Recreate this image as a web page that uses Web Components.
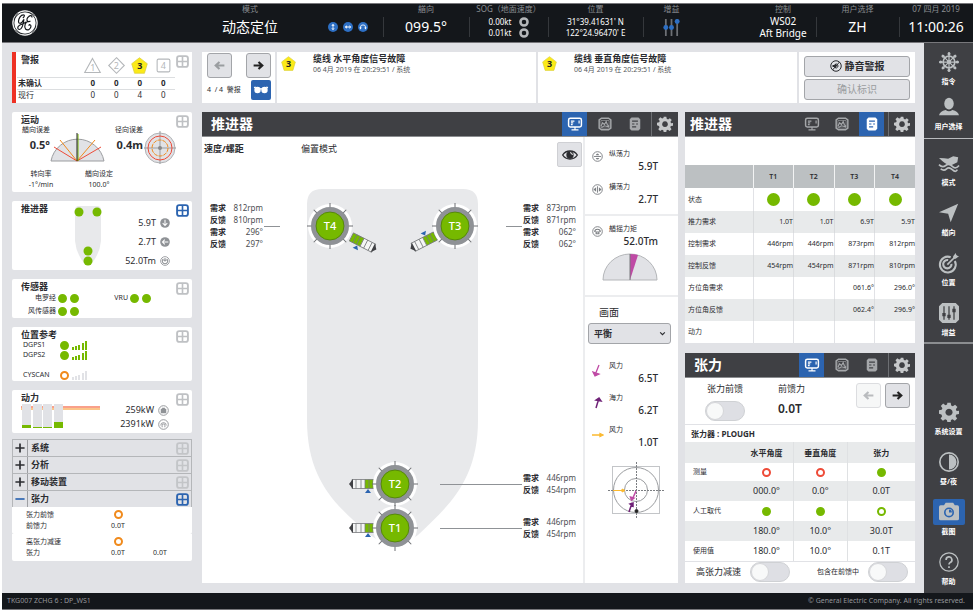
<!DOCTYPE html>
<html lang="zh">
<head>
<meta charset="utf-8">
<meta name="viewport" content="width=device-width, initial-scale=1">
<title>动态定位</title>
<style>
  body { margin: 0; background: #fff; font-family: "Noto Sans", "Noto Sans CJK SC", sans-serif; color: #2b2c30; }
</style>
</head>
<body>
<dp-app></dp-app>
<script>
const BASE = `
  *, *::before, *::after { box-sizing: border-box; }
  h2, h3, p, dl, dd, dt { margin: 0; }
  button, input, select { font: inherit; color: inherit; margin: 0; padding: 0; }
  button { cursor: pointer; }
  table { border-collapse: collapse; width: 100%; table-layout: fixed; }
  th, td { padding: 0; font-weight: 400; white-space: nowrap; }
  svg { display: block; }
`;
function define(name, css, html) {
  const tpl = document.createElement('template');
  customElements.define(name, class extends HTMLElement {
    constructor() {
      super();
      this.attachShadow({ mode: 'open' });
    }
    connectedCallback() {
      if (this.shadowRoot.firstChild) return;
      tpl.innerHTML = `<style>${BASE}${css}</style>${typeof html === 'function' ? html(this) : html}`;
      this.shadowRoot.append(tpl.content.cloneNode(true));
    }
  });
}

/* ---------- icons, all on a 24-unit grid ---------- */
const GEAR = `<path fill-rule="evenodd" d="M10 1h4l.6 3.2 2 .9 2.700-1.900 2.800 2.800-1.900 2.700.9 2L24 10.500v4l-3.200.5-.9 2 1.900 2.700-2.800 2.800-2.700-1.900-2 .9L14 24h-4l-.6-2.500-2-.9-2.700 1.900-2.800-2.800 1.900-2.700-.9-2L0 14v-4l3.200-.6.9-2-1.900-2.700 2.800-2.800 2.700 1.900 2-.9zM12 8a4.300 4.300 0 1 0 .01 0z"/>`;
const ICONS = {
  grid: `<rect x="2" y="2" width="20" height="20" rx="4" fill="none" stroke="currentColor" stroke-width="3.500"/><path d="M12 2v20M2 12h20" stroke="currentColor" stroke-width="3"/>`,
  left: `<path d="M21 12H6M12 5.500L5 12l7 6.500" fill="none" stroke="currentColor" stroke-width="4"/>`,
  right: `<path d="M3 12h15M12 5.500l7 6.500-7 6.500" fill="none" stroke="currentColor" stroke-width="4"/>`,
  glasses: `<circle cx="6" cy="12" r="5.500"/><circle cx="18" cy="12" r="5.500"/><path d="M0 8l3-1M24 8l-3-1M9 10h6" stroke="currentColor" stroke-width="2"/>`,
  monitor: `<rect x="1" y="2" width="22" height="15" rx="3" fill="none" stroke="currentColor" stroke-width="2.500"/><path d="M12 17v4M6 22h12M5 7h6M5 10h4M5 13h3M19 6v5" stroke="currentColor" stroke-width="2" fill="none"/>`,
  chart: `<path d="M6 2h12l4 3v14l-4 3H6l-4-3V5z" fill="none" stroke="currentColor" stroke-width="2.500"/><path d="M5 6h14v13H5z" fill="none" stroke="currentColor" stroke-width="1"/><path d="M5 16l3-6 3 3 3-5 2 5 3 3M6 18l5-3 8 2" fill="none" stroke="currentColor" stroke-width="2"/>`,
  list: `<path fill-rule="evenodd" d="M6 1h12l3 3v16l-3 3H6l-3-3V4zM7 6v2h10V6zM7 11v2h4v-2zM14 11v2h3v-2zM7 16v2h7v-2z"/>`,
  gear: GEAR,
  eye: `<path d="M1 12C6 4 18 4 23 12 18 20 6 20 1 12z" fill="none" stroke="currentColor" stroke-width="2"/><circle cx="12" cy="12" r="5.500"/><path d="M12 8.500a3.500 3.500 0 0 1 3.500 3.500" fill="none" stroke="#fff" stroke-width="1.500"/>`,
  mute: `<circle cx="12" cy="12" r="10.500" fill="none" stroke="currentColor" stroke-width="2"/><path d="M5 10h3l5-4v12l-5-4H5z"/><path d="M15 9q2 3 0 6M5 20L19 4" fill="none" stroke="currentColor" stroke-width="2"/>`,
  chevron: `<path d="M4 8l8 8 8-8" fill="none" stroke="currentColor" stroke-width="4"/>`,
  wheel: `<circle cx="12" cy="12" r="7" fill="none" stroke="currentColor" stroke-width="2"/><circle cx="12" cy="12" r="2.500"/><path d="M12 0v24M0 12h24M3.500 3.500l17 17M20.500 3.500l-17 17" stroke="currentColor" stroke-width="1.500"/><circle cx="12" cy="2" r="1.800"/><circle cx="12" cy="22" r="1.800"/><circle cx="2" cy="12" r="1.800"/><circle cx="22" cy="12" r="1.800"/><circle cx="5" cy="5" r="1.800"/><circle cx="19" cy="5" r="1.800"/><circle cx="5" cy="19" r="1.800"/><circle cx="19" cy="19" r="1.800"/>`,
  user: `<ellipse cx="12" cy="8" rx="5.700" ry="7"/><path d="M0 22q1-5 8-6.500 4 3 8 0 7 1.500 8 6.500z"/>`,
  wave: `<path d="M0 6q7 0 11 1l6-3 6 1-1 6-6 3q-5 1-9-2Q3 9 0 6z"/><path d="M0 14q4 4 8 1t8 1 8-1M2 19q4 3 7 0t7 1 6 0" fill="none" stroke="currentColor" stroke-width="2"/>`,
  pointer: `<path d="M23 1L14 23l-3-10L0 11z"/>`,
  target: `<path d="M19 9.500A9.500 9.500 0 1 1 14 5M15 13a5 5 0 1 1-4-4.500" fill="none" stroke="currentColor" stroke-width="2.500"/><path d="M10 14L21 3" stroke="currentColor" stroke-width="2"/><path d="M17 4l3-4 1 3 3 1-4 3h-3z"/>`,
  sliders: `<path d="M4 0h16l4 4v16l-4 4H4l-4-4V4z"/><path d="M6 4v16M12 4v16M18 4v16" stroke="#3f4044" stroke-width="1.500"/><path d="M4 12h4v4H4zM10 14h4v4h-4zM16 7h4v4h-4z" fill="#3f4044"/>`,
  contrast: `<circle cx="12" cy="12" r="11" fill="none" stroke="currentColor" stroke-width="2"/><path d="M12 3a9 9 0 0 1 0 18z"/>`,
  camera: `<path d="M2 4h4l2-3h9l2 3h3q2 0 2 2v14q0 2-2 2H2q-2 0-2-2V6q0-2 2-2z"/><circle cx="12" cy="12.500" r="6" fill="#2c64b0"/><circle cx="12" cy="12.500" r="4" fill="currentColor"/><path d="M12 12.500V9a3.500 3.500 0 0 1 3.500 3.500z" fill="#2c64b0"/>`,
  help: `<circle cx="12" cy="12" r="11" fill="none" stroke="currentColor" stroke-width="1.500"/><path d="M8.500 9.500a3.500 3.500 0 1 1 5 3q-1.500 1-1.500 2.500M12 17v2.200" fill="none" stroke="currentColor" stroke-width="2"/>`,
  surge: `<circle cx="12" cy="12" r="12"/><path d="M12 4l4 5H8zM12 20l4-5H8zM11 8h2v8h-2z" fill="#fff"/>`,
  sway: `<circle cx="12" cy="12" r="12"/><path d="M4 12l5-4v8zM20 12l-5-4v8zM8 11h8v2H8z" fill="#fff"/>`,
  yaw: `<circle cx="12" cy="12" r="12"/><path d="M6 15v-3q0-5 6-5t6 5v3" fill="none" stroke="#fff" stroke-width="2"/><path d="M3 13h6l-3 5zM15 13h6l-3 5z" fill="#fff"/>`,
  down: `<circle cx="12" cy="12" r="11.500"/><path d="M12 4v14M6.500 12.500L12 18l5.500-5.500" fill="none" stroke="#fff" stroke-width="2.500"/>`,
  back: `<circle cx="12" cy="12" r="11.500"/><path d="M20 12H6M11.500 6.500L6 12l5.500 5.500" fill="none" stroke="#fff" stroke-width="2.500"/>`,
  turn: `<circle cx="12" cy="12" r="10.500" fill="none" stroke="currentColor" stroke-width="2"/><path d="M8 7a6.500 6.500 0 1 0 8 0M12 5v8M8 10h8" fill="none" stroke="currentColor" stroke-width="2.500"/>`,
  battery: `<circle cx="12" cy="12" r="10.500" fill="none" stroke="currentColor" stroke-width="2"/><path d="M6 8h3V6h6v2h3v10H6z"/>`,
  plug: `<circle cx="12" cy="12" r="10.500" fill="none" stroke="currentColor" stroke-width="2"/><path d="M6 14a6 6 0 0 1 12 0M9 18v-4a3 3 0 0 1 6 0v4" fill="none" stroke="currentColor" stroke-width="2"/>`,
  surgeo: `<circle cx="12" cy="12" r="10.500" fill="none" stroke="currentColor" stroke-width="2"/><path d="M8 9q4-7 8 0zM8 15q4 7 8 0z"/><path d="M4 12h16" stroke="currentColor" stroke-width="2"/>`,
  swayo: `<circle cx="12" cy="12" r="10.500" fill="none" stroke="currentColor" stroke-width="2"/><path d="M9 7v10l-6-5zM15 7v10l6-5z"/><path d="M12 5v14" stroke="currentColor" stroke-width="2"/>`,
  yawo: `<circle cx="12" cy="12" r="10.500" fill="none" stroke="currentColor" stroke-width="2"/><path d="M6 13a6 6 0 0 1 12 0M9 17v-4h6v4z" fill="none" stroke="currentColor" stroke-width="2.500"/>`,
  plus: `<path d="M12 1v22M1 12h22" stroke="currentColor" stroke-width="4"/>`,
  minus: `<path d="M1 12h22" stroke="currentColor" stroke-width="4"/>`,
  ring: `<circle cx="12" cy="12" r="8.500" fill="#14171b" stroke="currentColor" stroke-width="6"/>`,
  tri: `<path d="M12 2l11 20H1z" fill="#fff" stroke="currentColor" stroke-width="1.500"/>`,
  dia: `<path d="M12 1l11 11-11 11L1 12z" fill="#fff" stroke="currentColor" stroke-width="1.500"/>`,
  pent: `<path d="M12 1l11 8.500-4 13.500H5L1 9.500z" fill="#fbea18" stroke="#d9cd3a" stroke-width="1"/>`,
  sq: `<rect x="3" y="3" width="18" height="18" rx="2" fill="#fff" stroke="currentColor" stroke-width="1.500"/>`,
  gains: `<path d="M4 0v24M12 0v24M20 0v24" stroke="#6d7075" stroke-width="2.500"/><g fill="#2d6fc4"><circle cx="4" cy="12" r="3.500"/><circle cx="12" cy="12" r="3.500"/><circle cx="20" cy="3.500" r="3.500"/></g>`
};
define('dp-icon', `:host { display: inline-block; width: 14px; height: 14px; flex: none; } svg { width: 100%; height: 100%; overflow: visible; }`,
  el => `<svg viewBox="0 0 24 24" fill="currentColor" aria-hidden="true">${ICONS[el.getAttribute('name')]}</svg>`);

/* numbered alarm class symbol */
define('dp-badge', `
  :host { display: inline-grid; place-items: center; width: 17px; height: 17px; color: #b4b7ba; font-size: 9px; line-height: 10px; }
  dp-icon { grid-area: 1/1; width: 100%; height: 100%; }
  span { grid-area: 1/1; z-index: 1; }
  :host([shape=pent]) { color: #222; font-weight: 700; }
  :host([shape=tri]) span { padding-top: 4px; }`,
  el => `<dp-icon name="${el.getAttribute('shape')}"></dp-icon><span><slot></slot></span>`);

define('dp-dot', `
  :host { display: inline-block; box-sizing: border-box; width: 9px; height: 9px; border-radius: 50%; border: 2px solid #76b900; background: #76b900; flex: none; vertical-align: middle; }
  :host([ring]) { background: #fff; }
  :host([tone=orange]) { border-color: #f08a1c; }
  :host([tone=red]) { border-color: #ee4b38; }
  :host([size=l]) { width: 13px; height: 13px; }`, ``);

define('dp-switch', `
  :host { display: inline-flex; align-items: center; justify-content: space-between; }
  label { display: inherit; flex-direction: inherit; align-items: center; gap: inherit; justify-content: inherit; flex: 1; }
  input { appearance: none; width: 40px; height: 20px; border-radius: 10px; background: #dedfe4; border: 1px solid #cfd1d4; display: block; }
  input::before { content: ""; display: block; width: 18px; height: 18px; border-radius: 50%; background: #f8f9f9; border: 1px solid #d5d6d9; }
`, `<label><slot></slot><input type="checkbox"></label>`);

/* ---------- top bar ---------- */
define('dp-stat', `
  :host { display: flex; flex-direction: column; align-items: center; min-width: 0; }
  .t { font-size: 8px; line-height: 10px; color: #8b8e92; white-space: nowrap; min-height: 10px; }
  .v { flex: 1; align-self: stretch; display: flex; align-items: center; justify-content: center; font-size: 14px; line-height: 16px; color: #fff; white-space: nowrap; margin-bottom: 2px; }
  :host([line]) .v { background: linear-gradient(#35383c, #35383c) left center / 1px 20px no-repeat; }
`, el => `<div class="t">${el.getAttribute('label') || ''}</div><div class="v"><slot></slot></div>`);

define('dp-topbar', `
  :host { box-sizing: border-box; display: grid; min-height: 40px; background: #14171b; border-top: 1px solid #77777b; border-bottom: 1px solid #77777b;
    grid-template-columns: minmax(0,166fr) minmax(0,164fr) minmax(0,51fr) minmax(0,86fr) minmax(0,79fr) minmax(0,95fr) minmax(0,107fr) minmax(0,66fr) minmax(0,83fr) minmax(0,74fr); }
  .logo { align-self: center; width: 26px; height: 26px; margin-left: 10px; }
  .deg { display: flex; gap: 5px; color: #2d6fc4; padding-right: 20px; }
  .deg dp-icon { width: 10px; height: 10px; }
  .two { display: grid; font-size: 8px; line-height: 11px; text-align: center; }
  .sog { grid-template-columns: auto auto; gap: 0 7px; align-items: center; }
  .sog dp-icon { width: 10px; height: 10px; color: #b5b7ba; }
  .ws { font-size: 10px; line-height: 12px; text-align: center; }
`, `
  <svg class="logo" viewBox="0 0 48 48" fill="none" stroke="#fff" role="img" aria-label="GE">
    <circle cx="24" cy="24" r="23" fill="#fff"/>
    <g stroke="#14171b"><circle cx="24" cy="24" r="20.500" stroke-width="1.500"/>
    <path stroke-width="2.200" d="M20 15c3-3 4-6 1-6-5 0-9 7-9 12 0 4 4 5 7 1l3-5M22 17c-1 8-2 18-8 19-4 0-5-5 0-8 4-2 9-3 12-6M37 14c0-4-3-5-6-2-3 2-5 7-2 9 2 1 4 0 5-1M30 21c-6 1-8 10-5 14 4 4 10 0 10-5 0-3-3-4-4-1"/>
    <path stroke-width="1.500" d="M11 6c-4 4-6 8-7 13M37 42c4-4 6-8 7-13M6 37c4 4 8 6 13 7M42 11c-4-4-8-6-13-7"/></g>
  </svg>
  <dp-stat label="模式">动态定位</dp-stat>
  <dp-stat><div class="deg"><dp-icon name="surge"></dp-icon><dp-icon name="sway"></dp-icon><dp-icon name="yaw"></dp-icon></div></dp-stat>
  <dp-stat line label="艏向">099.5°</dp-stat>
  <dp-stat line label="SOG（地面速度）"><div class="two sog"><span>0.00kt</span><dp-icon name="ring"></dp-icon><span>0.01kt</span><dp-icon name="ring"></dp-icon></div></dp-stat>
  <dp-stat line label="位置"><div class="two"><span>31°39.41631' N</span><span>122°24.96470' E</span></div></dp-stat>
  <dp-stat line label="增益" style="padding-right:50px"><dp-icon name="gains" style="width:17px;height:17px"></dp-icon></dp-stat>
  <dp-stat label="控制"><div class="ws">WS02<br>Aft Bridge</div></dp-stat>
  <dp-stat line label="用户选择">ZH</dp-stat>
  <dp-stat line label="07 四月 2019">11:00:26</dp-stat>
`);

/* ---------- left column ---------- */
define('dp-card', `
  :host { display: block; background: #fff; border-radius: 2px; padding: 1px 3px 1px 5px; }
  header { display: flex; justify-content: space-between; height: 12px; padding-left: 4px; }
  h2 { font-size: 9px; line-height: 13px; font-weight: 700; white-space: nowrap; }
  button { border: 0; background: none; width: 13px; height: 13px; margin-top: 2px; color: #bfc1c4; line-height: 0; position: relative; }
  button dp-icon { width: 13px; height: 13px; }
  :host([on]) button { color: #2c64b0; }
`, el => `<header><h2>${el.getAttribute('label')}</h2><button aria-label="展开${el.getAttribute('label')}"><dp-icon name="grid"></dp-icon></button></header><slot></slot>`);

define('dp-alarms', `
  :host { display: block; }
  dp-card { border-left: 4px solid #ee3124; padding-left: 1px; border-radius: 0; padding-bottom: 2px; }
  table { margin-top: -8px; width: calc(100% - 14px); font-size: 8px; line-height: 10px; }
  th:first-child { width: 64px; text-align: left; padding-left: 1px; }
  thead td, thead th { height: 20px; text-align: center; }
  tbody td, tbody th { height: 12px; border-top: 1px solid #dcdee0; text-align: center; }
  .b > * { font-weight: 700; }
`, `<dp-card label="警报"><table>
  <thead><tr><th></th><td><dp-badge shape="tri">1</dp-badge></td><td><dp-badge shape="dia">2</dp-badge></td><td><dp-badge shape="pent">3</dp-badge></td><td><dp-badge shape="sq">4</dp-badge></td></tr></thead>
  <tbody><tr class="b"><th>未确认</th><td>0</td><td>0</td><td>0</td><td>0</td></tr><tr><th>现行</th><td>0</td><td>0</td><td>4</td><td>0</td></tr></tbody></table></dp-card>`);

define('dp-motion', `
  :host { display: block; font-size: 7px; line-height: 10px; }
  .top { display: grid; grid-template-columns: 33px 55px 38px 34px; min-height: 38px; }
  .top b { display: block; font-size: 11px; line-height: 20px; text-align: right; }
  .top p { text-align: right; white-space: nowrap; }
  svg { align-self: end; justify-self: center; overflow: visible; }
  .bot { display: grid; grid-template-columns: 48px 68px; text-align: center; padding-top: 6px; }
  .bot p { padding-bottom: 1px; }
`, `<dp-card label="运动"><div class="top">
  <div><p>艏向误差</p><b>0.5°</b></div>
  <svg width="55" height="31" viewBox="0 0 55 31" fill="none"><path d="M1 29a27 27 0 0 1 53 0z" fill="#e1e2e6" stroke="#9b9da0"/><path d="M27 29L4 15M27 29l24-14" stroke="#ee4b38"/><path d="M27 29L10 8M27 29L45 8" stroke="#f08a1c"/><path d="M28 29V2" stroke="#76b900"/><path d="M27 29V1" stroke="#222"/></svg>
  <div><p>径向误差</p><b>0.4m</b></div>
  <svg width="32" height="32" viewBox="0 0 32 32" fill="none"><circle cx="16" cy="17" r="15" fill="#e1e2e6" stroke="#b0b2b5"/><path d="M16 0v33M0 17h32" stroke="#9b9da0"/><circle cx="16" cy="17" r="12" stroke="#ee4b38"/><circle cx="16" cy="17" r="8" stroke="#f08a1c" stroke-dasharray="4 1"/><circle cx="16" cy="17" r="2" fill="#888"/></svg>
  </div><div class="bot"><p>转向率</p><p>艏向设定</p><p>-1°/min</p><p>100.0°</p></div></dp-card>`);

define('dp-thrust-card', `
  :host { display: block; font-size: 9px; line-height: 19px; }
  .g { display: grid; grid-template-columns: 1fr 1fr; height: 55px; }
  svg { margin: -9px 0 0 57px; }
  .r p { display: flex; justify-content: flex-end; align-items: center; gap: 4px; padding-right: 19px; white-space: nowrap; }
  .r dp-icon { width: 10px; height: 10px; color: #8f9296; }
  .r { margin-top: -1px; }
`, `<dp-card on label="推进器"><div class="g"><svg width="28" height="61" viewBox="0 0 28 61"><path d="M1 5q0-4 4-4h18q4 0 4 4v31q-1 12-9 22h-8Q2 48 1 36z" fill="#e8e9eb"/><g fill="#76b900"><circle cx="5" cy="7" r="4.500"/><circle cx="23" cy="7" r="4.500"/><circle cx="14" cy="46" r="4.500"/><circle cx="14" cy="56" r="4.500"/></g></svg>
  <div class="r"><p>5.9T<dp-icon name="down"></dp-icon></p><p>2.7T<dp-icon name="back"></dp-icon></p><p>52.0Tm<dp-icon name="turn"></dp-icon></p></div></div></dp-card>`);

define('dp-sensors', `
  :host { display: block; font-size: 7px; line-height: 12px; }
  .g { display: grid; grid-template-columns: 39px 28px 40px 30px; gap: 1px 2px; align-items: center; }
  .g p { text-align: right; white-space: nowrap; }
  .d { display: flex; gap: 3px; }
`, `<dp-card label="传感器"><div class="g"><p>电罗经</p><span class="d"><dp-dot></dp-dot><dp-dot></dp-dot></span><p>VRU</p><span class="d"><dp-dot></dp-dot><dp-dot></dp-dot></span><p>风传感器</p><span class="d"><dp-dot></dp-dot><dp-dot></dp-dot></span></div></dp-card>`);

define('dp-posref', `
  :host { display: block; font-size: 7px; line-height: 10px; }
  .g { display: grid; grid-template-columns: 34px 9px 18px; gap: 0 3px; padding-left: 6px; grid-auto-rows: 10px; align-items: center; }
  .last { grid-row: 4; }
`, () => {
  const bars = c => `<svg width="16" height="9" viewBox="0 0 16 9" fill="${c}"><path d="M0 6h2v3H0zM3 5h2v4H3zM6 4h2v5H6zM10 2h2v7h-2zM13 0h2v9h-2z"/></svg>`;
  return `<dp-card label="位置参考"><div class="g"><span>DGPS1</span><dp-dot></dp-dot>${bars('#76b900')}<span>DGPS2</span><dp-dot></dp-dot>${bars('#76b900')}<span class="last">CYSCAN</span><dp-dot class="last" ring tone="orange"></dp-dot><span class="last">${bars('#e1e2e6')}</span></div></dp-card>`;
});

define('dp-power', `
  :host { display: block; font-size: 9px; line-height: 14px; }
  .g { display: flex; justify-content: space-between; padding: 0 20px 1px 4px; }
  p { display: flex; align-items: center; justify-content: flex-end; gap: 4px; }
  dp-icon { width: 11px; height: 11px; color: #8f9296; }
`, `<dp-card label="动力"><div class="g"><svg width="79" height="27" viewBox="0 0 79 27"><path d="M0 3h79v3H0z" fill="#f9a08a"/><path d="M0 5h79v2H0z" fill="#fbc58a"/><path d="M1 1h9v24H1zM12 1h9v24h-9zM22 1h9v24h-9zM33 1h9v24h-9z" fill="#e1e2e6"/><path d="M1 22h9v3H1zM12 24h9v1h-9zM22 24h9v1h-9zM33 19h9v6h-9z" fill="#76b900"/></svg>
  <div><p>259kW<dp-icon name="battery"></dp-icon></p><p>2391kW<dp-icon name="plug"></dp-icon></p></div></div></dp-card>`);

define('dp-fold', `
  :host { box-sizing: border-box; display: grid; grid-template-columns: 15px 1fr 18px; align-items: stretch; height: 17px; border: 1px solid #b4b6b9; border-bottom: 0; background: #e1e2e6; font-size: 9px; line-height: 15px; font-weight: 700; }
  button { border: 0; background: none; display: grid; place-items: center; }
  .t { border-right: 1px solid #9d9fa3; } .t dp-icon { width: 10px; height: 10px; }
  span { padding-left: 3px; }
  .e { color: #c3c5c8; } .e dp-icon { width: 13px; height: 13px; }
  :host([open]) .t, :host([open]) .e { color: #2c64b0; }
`, el => `<button class="t" aria-label="切换"><dp-icon name="${el.hasAttribute('open') ? 'minus' : 'plus'}"></dp-icon></button><span><slot></slot></span><button class="e" aria-label="展开"><dp-icon name="grid"></dp-icon></button>`);

define('dp-folds', `
  :host { display: block; margin-top: -3px; }
  .c { background: #fff; display: grid; grid-template-columns: 70px 44px 1fr; font-size: 7px; line-height: 11px; padding: 2px 12px 3px 14px; align-items: center; border-radius: 0 0 2px 2px; text-align: center; grid-auto-rows: 11px; }
  .c p { text-align: left; grid-column: 1; white-space: nowrap; }
  dp-dot { justify-self: center; }
`, `<dp-fold>系统</dp-fold><dp-fold>分析</dp-fold><dp-fold>移动装置</dp-fold><dp-fold open>张力</dp-fold>
  <div class="c"><p>张力前馈</p><dp-dot ring tone="orange"></dp-dot><p>前馈力</p><span>0.0T</span></div>
  <div class="c"><p>高张力减速</p><dp-dot ring tone="orange"></dp-dot><p>张力</p><span>0.0T</span><span>0.0T</span></div>`);

/* ---------- alerts strip ---------- */
define('dp-navbtn', `
  :host { display: inline-block; width: 25px; height: 25px; }
  button { width: 100%; height: 100%; display: grid; place-items: center; background: #e1e2e6; border: 1px solid #a3a5a9; border-radius: 3px; color: #222; }
  dp-icon { width: 13px; height: 13px; }
  :host([dim]) button { color: #9a9da0; }
  :host([faint]) button { color: #b9bbbe; background: #f6f7f7; border-color: #dcdde0; }
`, el => `<button aria-label="${el.getAttribute('label')}"><dp-icon name="${el.getAttribute('icon')}"></dp-icon></button>`);

define('dp-alert', `
  :host { display: flex; gap: 17px; background: #fff; padding: 1px 4px; min-width: 0; }
  dp-badge { width: 15px; height: 15px; margin-top: 3px; flex: none; }
  h3 { font-size: 9px; line-height: 12px; font-weight: 700; white-space: nowrap; }
  p { font-size: 7px; line-height: 10px; color: #55575b; white-space: nowrap; }
`, el => `<dp-badge shape="pent">3</dp-badge><div><h3>${el.getAttribute('label')}</h3><p>06 4月 2019 在 20:29:51 / 系统</p></div>`);

define('dp-alertbar', `
  :host { display: grid; grid-template-columns: 73px minmax(0,1fr) minmax(0,1fr) 116px; gap: 2px; }
  .n { background: #fff; display: grid; grid-template-columns: 25px 25px; justify-content: space-between; padding: 1px 4px 2px 5px; }
  .n span { font-size: 7px; line-height: 20px; white-space: nowrap; }
  .n .last { display: grid; justify-items: end; }
  .g { width: 20px; height: 20px; border: 0; border-radius: 2px; background: #2c64b0; color: #fff; display: grid; place-items: center; }
  .m { background: #fff; display: grid; align-content: center; gap: 2px; padding: 2px 5px; font-size: 10px; }
  .m button { height: 21px; background: #e1e2e6; border: 1px solid #a3a5a9; border-radius: 3px; display: flex; align-items: center; justify-content: center; gap: 3px; line-height: 12px; font-weight: 700; }
  .m button:disabled { color: #9a9da0; font-weight: 400; }
`, `<div class="n"><dp-navbtn dim icon="left" label="上一个"></dp-navbtn><dp-navbtn icon="right" label="下一个"></dp-navbtn><span>4&nbsp; / 4&nbsp; 警报</span><div class="last"><button class="g" aria-label="查看"><dp-icon name="glasses"></dp-icon></button></div></div>
  <dp-alert label="缆线 水平角度信号故障"></dp-alert><dp-alert label="缆线 垂直角度信号故障"></dp-alert>
  <div class="m"><button><dp-icon name="mute" style="width:12px;height:12px"></dp-icon>静音警报</button><button disabled>确认标识</button></div>`);

/* ---------- panels ---------- */
define('dp-panel', `
  :host { display: flex; flex-direction: column; background: #fff; min-width: 0; }
  header { display: flex; align-items: stretch; height: 25px; background: #3f4044; border-bottom: 1px solid #8b8d90; flex: none; }
  h2 { flex: 1; font-size: 14px; line-height: 24px; color: #fff; padding-left: 9px; font-weight: 700; }
  :host([tab=list]) h2 { padding-left: 5px; }
  button { border: 0; background: none; color: #a5a7aa; width: 25px; display: grid; place-items: center; }
  .tabs { display: flex; gap: 5px; padding-right: 4px; }
  .tabs dp-icon { width: 14px; height: 14px; }
  .tabs button.on { background: #2c64b0; color: #fff; }
  .gear { border-left: 1px solid #6d6f73; width: 27px; color: #c6c8ca; } .gear dp-icon { width: 16px; height: 16px; }
`, el => `<header><h2>${el.getAttribute('label')}</h2><div class="tabs">${['monitor', 'chart', 'list'].map(n => `<button aria-label="${n}" class="${n === el.getAttribute('tab') ? 'on' : ''}"><dp-icon name="${n}"></dp-icon></button>`).join('')}</div><button class="gear" aria-label="设置"><dp-icon name="gear"></dp-icon></button></header><slot></slot>`);

define('dp-readout', `
  :host { display: block; font-size: 8px; line-height: 12px; }
  dl { display: grid; grid-template-columns: auto 1fr; }
  dt { font-weight: 700; } dd { text-align: right; color: #4b4d51; }
`, el => `<dl>${el.getAttribute('rows').split(',').map((v, i) => `<dt>${i % 2 ? '反馈' : '需求'}</dt><dd>${v}</dd>`).join('')}</dl>`);

define('dp-vessel', `
  :host { display: grid; grid-template-columns: 61px 1fr 60px; grid-template-rows: 30px 1fr; min-width: 0; }
  svg { grid-area: 1 / 1 / -1 / -1; width: 100%; height: 100%; }
  .top { grid-area: 1 / 1 / 2 / -1; display: flex; font-size: 9px; line-height: 24px; padding: 0 1px 0 2px; z-index: 1; }
  .top h3 { font-size: 9px; font-weight: 700; flex: 0 0 97px; }
  .top span { flex: 1; }
  .top button { width: 25px; height: 25px; margin-top: 5px; background: #e1e2e6; border: 1px solid #cfd0d4; border-radius: 2px; display: grid; place-items: center; }
  .l { grid-area: 2 / 1; padding: 35px 0 0 8px; }
  .r { grid-area: 2 / 3; padding: 35px 7px 0 0; }
  .low { margin-top: 222px; } .low2 { margin-top: 20px; }
  text { font: 500 11px "Noto Sans", sans-serif; fill: #fff; text-anchor: middle; }
`, () => {
  const ticks = Array.from({ length: 8 }, (_, i) => `<path d="M0-23v5" transform="rotate(${i * 45})" stroke="#6d6f73" stroke-width="1"/>`).join('');
  const thr = (n, x, y, a, flip, s) => `<g transform="translate(${x} ${y})"><g transform="rotate(${a}) translate(${s} 0)">
    <path d="M22-4.500h12v9H22z" fill="#76b900"/><path d="M34-4.500h13v9H34z" fill="#f4f5f5"/><path d="M22-4.500h25v9H22zM26-4.500v9M30-4.500v9M34-4.500v9M38-4.500v9M43-4.500v9" fill="none" stroke="#77797c" stroke-width=".8"/><path d="M46-5l4 5-4 5z" fill="#3f4044"/><path d="M31 ${flip * 5}l-3 ${flip * 4}h6z" fill="#2c64b0"/></g>
    <circle r="22" fill="#fff"/>${ticks}<circle r="16.500" fill="#76b900" stroke="#8f9296" stroke-width="5"/><circle r="14" fill="#76b900" stroke="#4e7a10" stroke-width=".8"/><text y="4">${n}</text></g>`;
  return `<svg viewBox="0 0 381 446" preserveAspectRatio="xMidYMin meet"><path d="M105 67q0-15 15-15H261q15 0 15 15V283C276 345 245 370 216 398Q193 416 168 398C136 370 105 345 105 283z" fill="#e8e9eb"/>
    <path d="M62 89.500h16M304 89.500h16M238 347.500h82M238 391.500h82" stroke="#8f9296" fill="none"/>
    ${thr('T4', 128, 89, 27, 1, 2)}${thr('T3', 253, 89, 153, 1, 0)}${thr('T2', 193, 347, 180, -1, -4)}${thr('T1', 193, 391, 180, -1, -4)}</svg>
  <div class="top"><h3>速度/螺距</h3><span>偏置模式</span><button aria-label="显示"><dp-icon name="eye" style="width:16px;height:16px"></dp-icon></button></div>
  <div class="l"><dp-readout rows="812rpm,810rpm,296°,297°"></dp-readout></div>
  <div class="r"><dp-readout rows="873rpm,871rpm,062°,062°"></dp-readout><dp-readout class="low" rows="446rpm,454rpm"></dp-readout><dp-readout class="low2" rows="446rpm,454rpm"></dp-readout></div>`;
});

define('dp-force', `
  :host { display: grid; grid-template-columns: 12px 1fr; gap: 0 5px; align-items: start; padding: 0 13px 0 4px; font-size: 7px; line-height: 12px; }
  b { grid-column: 1 / -1; text-align: right; font-size: 10px; line-height: 13px; font-weight: 500; }
  .i { padding-top: 3px; height: 12px; line-height: 0; color: #7b7e82; }
`, el => `<span class="i"><slot></slot></span><span>${el.getAttribute('label')}</span><b>${el.getAttribute('value')}</b>`);

define('dp-forces', `
  :host { display: flex; flex-direction: column; border-left: 2px solid #ecedef; }
  section { padding: 11px 7px 0 3px; border-bottom: 2px solid #ecedef; }
  .a { height: 79px; } .b { height: 81px; padding-top: 7px; } .c { border: 0; padding-top: 6px; }
  .a dp-force + dp-force { margin-top: 8px; }
  dp-icon { width: 11px; height: 11px; }
  .gauge { margin: 4px auto 0; }
  label { display: block; font-size: 10px; line-height: 18px; padding: 0 0 2px 11px; }
  .sel { display: grid; align-items: center; }
  select { grid-area: 1/1; appearance: none; width: 100%; height: 21px; font-size: 9px; font-weight: 700; background: #e1e2e6; border: 1px solid #a3a5a9; border-radius: 3px; padding-left: 5px; }
  .sel dp-icon { grid-area: 1/1; justify-self: end; margin-right: 5px; width: 7px; height: 7px; pointer-events: none; }
  .env { display: grid; gap: 7px; padding-top: 16px; }
  .comp { margin: 12px 6px 0 auto; }
`, `<section class="a"><dp-force label="纵荡力" value="5.9T"><dp-icon name="surgeo"></dp-icon></dp-force><dp-force label="横荡力" value="2.7T"><dp-icon name="swayo"></dp-icon></dp-force></section>
  <section class="b"><dp-force label="艏摇力矩" value="52.0Tm"><dp-icon name="yawo"></dp-icon></dp-force>
  <svg class="gauge" width="56" height="30" viewBox="0 0 56 30"><path d="M1 28a27 26 0 0 1 54 0z" fill="#e1e2e6" stroke="#b4b6b9"/><path d="M28 28V2q5 0 8 1z" fill="#bf4aa5"/><path d="M28 28V2" stroke="#77797c"/></svg></section>
  <section class="c"><label for="view">画面</label><div class="sel"><select id="view"><option>平衡</option></select><dp-icon name="chevron"></dp-icon></div>
  <div class="env">
   <dp-force label="风力" value="6.5T"><svg width="12" height="16" viewBox="0 0 12 16"><path d="M7 2L3 12M1 9l2 4 4-2z" fill="#bf4aa5" stroke="#bf4aa5" stroke-width="1.300"/></svg></dp-force>
   <dp-force label="海力" value="6.2T"><svg width="12" height="16" viewBox="0 0 12 16"><path d="M4 13L7 3M4 5l3-2 2 3z" fill="#6f2277" stroke="#6f2277" stroke-width="1.500"/></svg></dp-force>
   <dp-force label="风力" value="1.0T"><svg width="12" height="16" viewBox="0 0 12 16"><path d="M0 8h9M8 6.500L11 8l-3 1.500z" fill="#fbb92f" stroke="#fbb92f" stroke-width="1.300"/></svg></dp-force>
  </div>
  <svg class="comp" width="58" height="58" viewBox="0 0 58 58" fill="none" stroke="#9b9da0"><rect x="5.500" y="5.500" width="47" height="47" stroke="#c3c5c8"/><circle cx="29" cy="29" r="22.500"/><circle cx="29" cy="29" r="11.500"/><path d="M29.500 1v56M1 29.500h56" stroke-dasharray="2 1" stroke="#7b7e82"/><path d="M6 29.500h11M15 28l3 1.500-3 1.500z" stroke="#fbb92f" fill="#fbb92f"/><path d="M29 30l-4 9M23.500 36l1 3 2.500-2z" stroke="#bf4aa5" stroke-width="1.500"/><path d="M22 51l3-9M23 43l3-1 0 3z" stroke="#6f2277" stroke-width="1.500"/><circle cx="29.500" cy="50" r="1.500" fill="#222" stroke="#222"/></svg></section>`);

define('dp-thruster-view', `
  :host { display: grid; grid-template-columns: minmax(0,1fr) 95px; flex: 1; }
`, `<dp-vessel></dp-vessel><dp-forces></dp-forces>`);

define('dp-thruster-table', `
  :host { display: block; padding-top: 28px; font-size: 7px; line-height: 10px; }
  th, td { height: 22px; border-right: 1px solid #e1e2e6; text-align: right; vertical-align: middle; }
  th:last-child, td:last-child { border-right: 0; }
  thead th { background: #bcc0c2; text-align: center; font-weight: 600; border-color: #f2f3f3; height: 23px; }
  thead th:first-child { width: 68px; }
  tbody th { text-align: left; padding-left: 3px; }
  tbody tr:nth-child(even) > * { background: #e8eaeb; border-color: #d9dbdd; }
  tbody tr:first-child td { text-align: center; height: 23px; }
`, () => {
  const dot = '<dp-dot size="l"></dp-dot>';
  const rows = [['状态', dot, dot, dot, dot], ['推力需求', '1.0T', '1.0T', '6.9T', '5.9T'], ['控制需求', '446rpm', '446rpm', '873rpm', '812rpm'], ['控制反馈', '454rpm', '454rpm', '871rpm', '810rpm'], ['方位角需求', '', '', '061.6°', '296.0°'], ['方位角反馈', '', '', '062.4°', '296.9°'], ['动力', '', '', '', '']];
  return `<table><thead><tr><th></th><th>T1</th><th>T2</th><th>T3</th><th>T4</th></tr></thead><tbody>${rows.map(r => `<tr><th>${r[0]}</th>${r.slice(1).map(c => `<td>${c}</td>`).join('')}</tr>`).join('')}</tbody></table>`;
});

define('dp-tension', `
  :host { display: flex; flex-direction: column; flex: 1; font-size: 9px; line-height: 14px; }
  .top { display: grid; grid-template-columns: 73px 1fr auto; height: 47px; padding: 4px 5px 0 20px; border-bottom: 1px solid #e1e2e6; }
  .top dp-switch { flex-direction: column; gap: 5px; justify-self: start; align-self: start; }
  .top b { display: block; font-size: 12px; line-height: 26px; font-weight: 600; }
  .nav { display: flex; gap: 4px; padding-top: 1px; }
  h3 { font-size: 8px; line-height: 17px; padding-left: 6px; font-weight: 700; }
  th, td { height: 20px; text-align: center; border-right: 1px solid #dfe1e3; }
  thead th { height: 21px; font-size: 8px; font-weight: 700; background: #e8eaeb; }
  th:first-child { width: 55px; text-align: left; padding-left: 8px; font-size: 7px; border-right: 0; }
  th:last-child, td:last-child { border-right: 0; }
  tbody tr:nth-child(even) > * { background: #e8eaeb; }
  tbody tr:first-child > * { height: 18px; }
  .bot { display: flex; justify-content: space-between; border-top: 1px solid #e1e2e6; padding: 0 7px 0 11px; white-space: nowrap; }
  .bot dp-switch { gap: 9px; } .s { font-size: 7px; }
`, `<div class="top"><dp-switch>张力前馈</dp-switch><div>前馈力<b>0.0T</b></div><div class="nav"><dp-navbtn faint icon="left" label="上一个"></dp-navbtn><dp-navbtn icon="right" label="下一个"></dp-navbtn></div></div>
  <h3>张力器 : PLOUGH</h3>
  <table><thead><tr><th></th><th>水平角度</th><th>垂直角度</th><th style="width:68px">张力</th></tr></thead><tbody>
  <tr><th>测量</th><td><dp-dot ring tone="red"></dp-dot></td><td><dp-dot ring tone="red"></dp-dot></td><td><dp-dot></dp-dot></td></tr>
  <tr><th></th><td>000.0°</td><td>0.0°</td><td>0.0T</td></tr>
  <tr><th>人工取代</th><td><dp-dot></dp-dot></td><td><dp-dot></dp-dot></td><td><dp-dot ring></dp-dot></td></tr>
  <tr><th></th><td>180.0°</td><td>10.0°</td><td>30.0T</td></tr>
  <tr><th>使用值</th><td>180.0°</td><td>10.0°</td><td>0.1T</td></tr></tbody></table>
  <div class="bot"><dp-switch>高张力减速</dp-switch><dp-switch class="s">包含在前馈中</dp-switch></div>`);

/* ---------- right navigation ---------- */
define('dp-navitem', `
  :host { display: block; }
  button { width: 100%; border: 0; background: none; display: grid; grid-template-rows: 26px 12px; gap: 1px; justify-items: center; color: #fff; font-size: 7px; line-height: 12px; font-weight: 700; }
  i { width: 32px; height: 26px; display: grid; place-items: center; color: #bcc0c2; border-radius: 2px; }
  dp-icon { width: 20px; height: 20px; }
  :host([on]) i { background: #2c64b0; }
`, el => `<button><i><dp-icon name="${el.getAttribute('icon')}"></dp-icon></i><span><slot></slot></span></button>`);

define('dp-sidebar', `
  :host { display: flex; flex-direction: column; background: #3f4044; }
  nav { display: grid; gap: 11px; }
  .a { gap: 6px; padding: 6px 0 5px; border-bottom: 1px solid #b9bbbe; }
  .b { padding: 11px 0 3px; border-bottom: 2px solid #8b8d90; }
  .c { margin-top: auto; padding-bottom: 5px; }
`, `<nav class="a"><dp-navitem icon="wheel">指令</dp-navitem><dp-navitem icon="user">用户选择</dp-navitem></nav>
  <nav class="b"><dp-navitem icon="wave">模式</dp-navitem><dp-navitem icon="pointer">艏向</dp-navitem><dp-navitem icon="target">位置</dp-navitem><dp-navitem icon="sliders">增益</dp-navitem></nav>
  <nav class="c"><dp-navitem icon="gear">系统设置</dp-navitem><dp-navitem icon="contrast">昼/夜</dp-navitem><dp-navitem icon="camera" on>截图</dp-navitem><dp-navitem icon="help">帮助</dp-navitem></nav>`);

/* ---------- page ---------- */
define('dp-app', `
  :host { display: flex; flex-direction: column; min-height: calc(100vh - 8px); margin: 3px 4px 5px 2px; background: #e1e2e6; }
  main { flex: 1; display: grid; grid-template-columns: 180px minmax(0,1fr) 49px; gap: 0 9px; padding-left: 10px; }
  .left { display: grid; gap: 9px; align-content: start; padding-top: 9px; }
  .left > * { min-width: 0; }
  .work { display: grid; grid-template-columns: minmax(0,1fr) 230px; grid-template-rows: auto 1fr; gap: 9px 7px; padding: 9px 0 10px 1px; }
  dp-alertbar { grid-column: 1 / -1; min-height: 51px; }
  .right { display: flex; flex-direction: column; gap: 10px; }
  .right dp-panel:last-child { flex: 1; }
  footer { display: flex; justify-content: space-between; background: #14171b; color: #94969a; font-size: 7px; line-height: 16px; padding: 0 8px 0 5px; border-bottom: 1px solid #77777b; }
`, `<dp-topbar></dp-topbar>
  <main>
    <div class="left"><dp-alarms></dp-alarms><dp-motion></dp-motion><dp-thrust-card></dp-thrust-card><dp-sensors></dp-sensors><dp-posref></dp-posref><dp-power></dp-power><dp-folds></dp-folds></div>
    <div class="work"><dp-alertbar></dp-alertbar>
      <dp-panel label="推进器" tab="monitor"><dp-thruster-view></dp-thruster-view></dp-panel>
      <div class="right"><dp-panel label="推进器" tab="list"><dp-thruster-table></dp-thruster-table></dp-panel><dp-panel label="张力" tab="monitor"><dp-tension></dp-tension></dp-panel></div>
    </div>
    <dp-sidebar></dp-sidebar>
  </main>
  <footer><span>TKG007 ZCHG 6 : DP_WS1</span><span>© General Electric Company. All rights reserved.</span></footer>`);
</script>
</body>
</html>
